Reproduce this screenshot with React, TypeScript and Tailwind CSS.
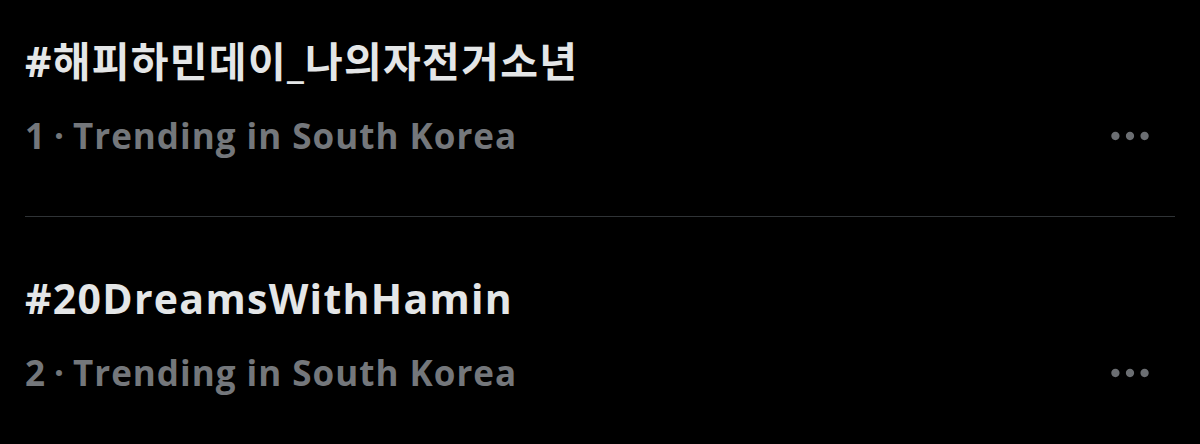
type Trend = {
  rank: number;
  tag: string;
  place: string;
};

const trends: Trend[] = [
  { rank: 1, tag: "#해피하민데이_나의자전거소년", place: "Trending in South Korea" },
  { rank: 2, tag: "#20DreamsWithHamin", place: "Trending in South Korea" },
];

const font = {
  fontFamily: '"Open Sans", "Noto Sans CJK KR", "Noto Sans", sans-serif',
};

function MoreIcon() {
  return (
    <svg viewBox="0 0 24 24" className="h-[50px] w-[50px] fill-[#6b6e72]">
      <path d="M3 12c0-1.1.9-2 2-2s2 .9 2 2-.9 2-2 2-2-.9-2-2zm9 2c1.1 0 2-.9 2-2s-.9-2-2-2-2 .9-2 2 .9 2 2 2zm7 0c1.1 0 2-.9 2-2s-.9-2-2-2-2 .9-2 2 .9 2 2 2z" />
    </svg>
  );
}

export default function App() {
  return (
    <div className="h-[444px] w-[1200px] overflow-hidden bg-black px-[25px]" style={font}>
      {trends.map((t, i) => (
        <div
          key={t.rank}
          className={
            i === 0
              ? "border-b border-[#2f3336] pt-[37px] pb-[60px]"
              : "pt-[57px]"
          }
        >
          <div className="text-[41px] font-bold leading-[48px] tracking-[1.3px] text-[#e4e6e7]">
            {t.tag}
          </div>
          <div className="mt-[31px] flex h-[40px] items-center justify-between">
            <div className="text-[35px] font-bold leading-[40px] tracking-[1px] text-[#74777b]">
              {t.rank}
              <span className="mx-[8px]">·</span>
              {t.place}
            </div>
            <div className="mr-[20px] flex h-[40px] items-center">
              <MoreIcon />
            </div>
          </div>
        </div>
      ))}
    </div>
  );
}
